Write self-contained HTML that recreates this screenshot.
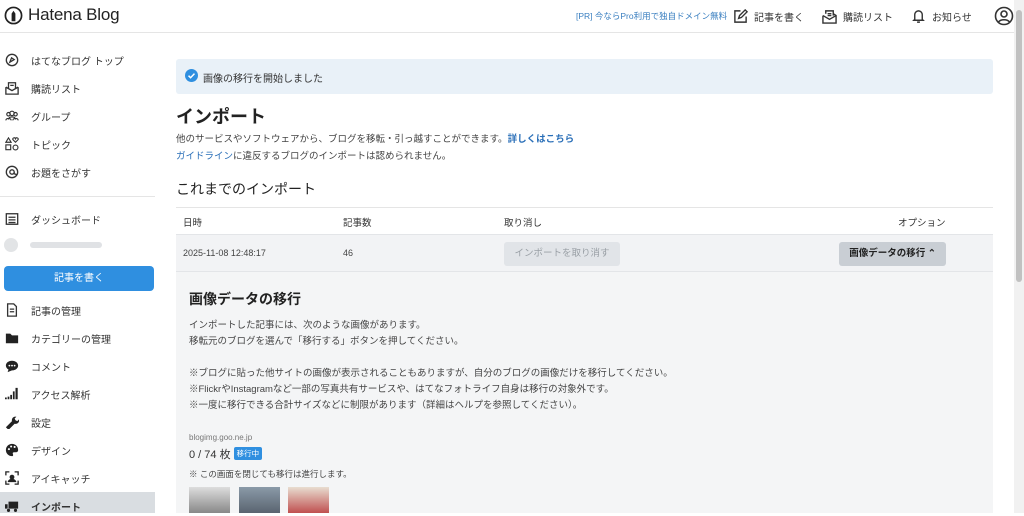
<!DOCTYPE html>
<html><head><meta charset="utf-8"><style>
*{box-sizing:border-box;margin:0;padding:0}
body{width:1024px;height:513px;overflow:hidden;background:#fff;font-family:"Liberation Sans","Noto Sans CJK JP",sans-serif;color:#333;position:relative}
.abs{position:absolute}
.hdr{left:0;top:0;width:1014px;height:33px;border-bottom:1px solid #e5e5e5}
.sb{font-size:10px;color:#333}
.item{position:absolute;left:5px;height:20px;display:flex;align-items:center;font-size:10px}
.item svg{width:14px;height:14px;margin-right:12px}
.t10{font-size:10px}
</style></head><body>
<div class="abs hdr"></div>
<div class="abs" style="left:4px;top:5px;display:flex;align-items:center">
<svg width="19" height="19" viewBox="0 0 20 20"><circle cx="10" cy="10" r="8.5" fill="none" stroke="#222" stroke-width="1.8"/><path d="M8 16V8l2-3 2 3v8z" fill="#222"/></svg>
<span style="font-size:17px;margin-left:5px;color:#222;letter-spacing:-0.2px">Hatena Blog</span></div>
<div class="abs" style="left:576px;top:10px;font-size:8.5px;color:#3a7fc0">[PR] 今ならPro利用で独自ドメイン無料</div>
<div class="abs" style="left:733px;top:6px;display:flex;align-items:center;font-size:10px;color:#333">
<svg width="15" height="15" viewBox="0 0 16 16" fill="none" stroke="#333" stroke-width="1.5"><path d="M8 2H2v12h12V8"/><path d="M6 10l1-3 6-6 2 2-6 6z"/></svg><span style="margin-left:6px">記事を書く</span>
<svg style="margin-left:18px" width="15" height="15" viewBox="0 0 16 16" fill="none" stroke="#333" stroke-width="1.5"><path d="M1 7v8h14V7l-3-2M4 5v-3h8v5M1 7l7 4 7-4M6 5h4M6 7h4"/></svg><span style="margin-left:6px">購読リスト</span>
<svg style="margin-left:18px" width="15" height="15" viewBox="0 0 16 16" fill="none" stroke="#333" stroke-width="1.5"><path d="M4 11V6a4 4 0 018 0v5l1 1H3zM6.5 14h3"/></svg><span style="margin-left:6px">お知らせ</span>
<svg style="margin-left:22px" width="20" height="20" viewBox="0 0 20 20" fill="none" stroke="#333" stroke-width="1.6"><circle cx="10" cy="10" r="8.5"/><circle cx="10" cy="8" r="3"/><path d="M4.5 16c2-3 9-3 11 0"/></svg></div>
<div class="abs" style="left:1014px;top:0;width:10px;height:513px;background:#f1f1f1"></div>
<div class="abs" style="left:1016px;top:10px;width:6px;height:272px;background:#c1c1c1;border-radius:3px"></div>

<!-- sidebar -->
<div class="item" style="top:50px"><svg viewBox="0 0 16 16" fill="none" stroke="#333" stroke-width="1.5"><circle cx="8" cy="8" r="6.5"/><path d="M5.5 10.5l2-5 3 2z"/></svg>はてなブログ トップ</div>
<div class="item" style="top:78px"><svg viewBox="0 0 16 16" fill="none" stroke="#333" stroke-width="1.5"><path d="M1 7v8h14V7M4 9V2h8v7M1 7l7 4 7-4M6 5h4"/></svg>購読リスト</div>
<div class="item" style="top:106px"><svg viewBox="0 0 16 16" fill="none" stroke="#333" stroke-width="1.3"><circle cx="4" cy="6" r="2"/><circle cx="12" cy="6" r="2"/><circle cx="8" cy="5" r="2.5"/><path d="M1 13c0-3 6-3 6 0M9 13c0-3 6-3 6 0M4 12c0-4 8-4 8 0"/></svg>グループ</div>
<div class="item" style="top:134px"><svg viewBox="0 0 16 16" fill="none" stroke="#333" stroke-width="1.3"><path d="M4 1l3 5H1z"/><path d="M12 6l-3-3a1.5 1.5 0 013-1 1.5 1.5 0 013 1z"/><rect x="1" y="9" width="5.5" height="5.5"/><circle cx="12" cy="12" r="2.8"/></svg>トピック</div>
<div class="item" style="top:162px"><svg viewBox="0 0 16 16" fill="none" stroke="#333" stroke-width="1.5"><circle cx="8" cy="8" r="6.5"/><circle cx="8" cy="8" r="2.5"/><path d="M10.5 8v2l3 1"/></svg>お題をさがす</div>
<div class="abs" style="left:0;top:196px;width:155px;height:1px;background:#e5e5e5"></div>
<div class="item" style="top:209px"><svg viewBox="0 0 16 16" fill="none" stroke="#333" stroke-width="1.5"><rect x="1.5" y="2" width="13" height="12"/><path d="M4 6h8M4 9h8M4 12h8"/></svg>ダッシュボード</div>
<div class="abs" style="left:4px;top:238px;width:14px;height:14px;border-radius:50%;background:#e2e4e6"></div>
<div class="abs" style="left:30px;top:242px;width:72px;height:6px;background:#e0e2e5;border-radius:3px"></div>
<div class="abs" style="left:4px;top:266px;width:150px;height:25px;background:#2f8fe0;border-radius:4px;color:#fff;font-size:10px;text-align:center;line-height:25px">記事を書く</div>
<div class="item" style="top:300px"><svg viewBox="0 0 16 16" fill="none" stroke="#333" stroke-width="1.5"><path d="M3 1h7l3 3v11H3zM5.5 7h5M5.5 10h5"/></svg>記事の管理</div>
<div class="item" style="top:328px"><svg viewBox="0 0 16 16"><path d="M1 3h5l2 2h7v9H1z" fill="#222"/></svg>カテゴリーの管理</div>
<div class="item" style="top:356px"><svg viewBox="0 0 16 16"><path d="M8 2c4 0 7 2.5 7 5.5S12 13 8 13l-5 2 1-3C2 11 1 9 1 7.5 1 4.5 4 2 8 2z" fill="#222"/><circle cx="5" cy="7.5" r="1" fill="#fff"/><circle cx="8" cy="7.5" r="1" fill="#fff"/><circle cx="11" cy="7.5" r="1" fill="#fff"/></svg>コメント</div>
<div class="item" style="top:384px"><svg viewBox="0 0 16 16" fill="#222"><rect x="0" y="12" width="2" height="2"/><rect x="3" y="11" width="2" height="3"/><rect x="6" y="9" width="2" height="5"/><rect x="9" y="5" width="2" height="9"/><rect x="12" y="1" width="2.5" height="13"/></svg>アクセス解析</div>
<div class="item" style="top:412px"><svg viewBox="0 0 16 16"><path d="M1 14l7-7a4 4 0 015-5l-2 2 1 2 2 1 2-2a4 4 0 01-5 5l-7 7z" fill="#222"/></svg>設定</div>
<div class="item" style="top:440px"><svg viewBox="0 0 16 16"><path d="M8 1a7 7 0 000 14c1.5 0 1.5-1.5 1-2.5s0-2 1.5-2H13a2.5 2.5 0 002-2.5C15 4 12 1 8 1z" fill="#222"/><circle cx="4.5" cy="7" r="1.2" fill="#fff"/><circle cx="7" cy="4" r="1.2" fill="#fff"/><circle cx="11" cy="4.5" r="1.2" fill="#fff"/></svg>デザイン</div>
<div class="item" style="top:468px"><svg viewBox="0 0 16 16" fill="none" stroke="#222" stroke-width="1.5"><path d="M1 5V1h4M11 1h4v4M15 11v4h-4M5 15H1v-4"/><circle cx="8" cy="7" r="2" fill="#222"/><path d="M4 12c1-3 7-3 8 0z" fill="#222"/></svg>アイキャッチ</div>
<div class="abs" style="left:0;top:492px;width:155px;height:21px;background:#d9dde1"></div>
<div class="item" style="top:496px;font-weight:bold"><svg viewBox="0 0 16 16" fill="#222"><rect x="4" y="3" width="11" height="8"/><path d="M0 6h3v5H0z"/><circle cx="4" cy="13" r="1.8"/><circle cx="12" cy="13" r="1.8"/></svg>インポート</div>

<!-- main -->
<div class="abs" style="left:176px;top:59px;width:817px;height:35px;background:#e9f1f8;border-radius:3px"></div>
<svg class="abs" style="left:185px;top:69px" width="13" height="13" viewBox="0 0 14 14"><circle cx="7" cy="7" r="7" fill="#2f8fe0"/><path d="M3.8 7.2l2.2 2.2 4.2-4.4" fill="none" stroke="#fff" stroke-width="1.6"/></svg>
<div class="abs t10" style="left:203px;top:70px">画像の移行を開始しました</div>
<div class="abs" style="left:176px;top:103px;font-size:18px;font-weight:bold;color:#222">インポート</div>
<div class="abs" style="left:176px;top:131px;font-size:9.5px;color:#444">他のサービスやソフトウェアから、ブログを移転・引っ越すことができます。<span style="color:#2a6fb8;font-weight:bold">詳しくはこちら</span></div>
<div class="abs" style="left:176px;top:148px;font-size:9.5px;color:#444"><span style="color:#2a6fb8">ガイドライン</span>に違反するブログのインポートは認められません。</div>
<div class="abs" style="left:176px;top:179px;font-size:14px;color:#222">これまでのインポート</div>
<div class="abs" style="left:176px;top:207px;width:817px;height:1px;background:#e5e5e5"></div>
<div class="abs" style="left:183px;top:215px;font-size:9.5px">日時</div>
<div class="abs" style="left:343px;top:215px;font-size:9.5px">記事数</div>
<div class="abs" style="left:504px;top:215px;font-size:9.5px">取り消し</div>
<div class="abs" style="left:898px;top:215px;font-size:9.5px">オプション</div>
<div class="abs" style="left:176px;top:234px;width:817px;height:38px;background:#f2f3f5;border-top:1px solid #e3e5e8;border-bottom:1px solid #e3e5e8"></div>
<div class="abs" style="left:183px;top:248px;font-size:9px;color:#444">2025-11-08 12:48:17</div>
<div class="abs" style="left:343px;top:248px;font-size:9px;color:#444">46</div>
<div class="abs" style="left:504px;top:242px;width:116px;height:24px;background:#e1e4e8;border-radius:3px;color:#9aa0a6;font-size:9.5px;text-align:center;line-height:24px">インポートを取り消す</div>
<div class="abs" style="left:839px;top:242px;width:107px;height:24px;background:#c9ced4;border-radius:3px;color:#222;font-size:9.5px;font-weight:bold;text-align:center;line-height:24px">画像データの移行 ⌃</div>
<div class="abs" style="left:176px;top:272px;width:817px;height:241px;background:#f4f5f6"></div>
<div class="abs" style="left:189px;top:289px;font-size:14px;font-weight:bold;color:#222">画像データの移行</div>
<div class="abs" style="left:189px;top:318px;font-size:9.5px;color:#444;line-height:16px">インポートした記事には、次のような画像があります。<br>移転元のブログを選んで「移行する」ボタンを押してください。<br><br>※ブログに貼った他サイトの画像が表示されることもありますが、自分のブログの画像だけを移行してください。<br>※FlickrやInstagramなど一部の写真共有サービスや、はてなフォトライフ自身は移行の対象外です。<br>※一度に移行できる合計サイズなどに制限があります（詳細はヘルプを参照してください）。</div>
<div class="abs" style="left:189px;top:433px;font-size:8px;color:#777">blogimg.goo.ne.jp</div>
<div class="abs" style="left:189px;top:446px;font-size:11px;color:#333">0 / 74 枚 <span style="display:inline-block;background:#2f8fe0;color:#fff;font-size:7.5px;padding:1px 3px;border-radius:2px;vertical-align:2px">移行中</span></div>
<div class="abs" style="left:189px;top:468px;font-size:8.5px;color:#444">※ この画面を閉じても移行は進行します。</div>
<div class="abs" style="left:189px;top:487px;width:41px;height:26px;background:linear-gradient(#ddd,#888)"></div>
<div class="abs" style="left:239px;top:487px;width:41px;height:26px;background:linear-gradient(#8a9aa8,#5a6470)"></div>
<div class="abs" style="left:288px;top:487px;width:41px;height:26px;background:linear-gradient(#e8ddd0,#c05050)"></div>
</body></html>
